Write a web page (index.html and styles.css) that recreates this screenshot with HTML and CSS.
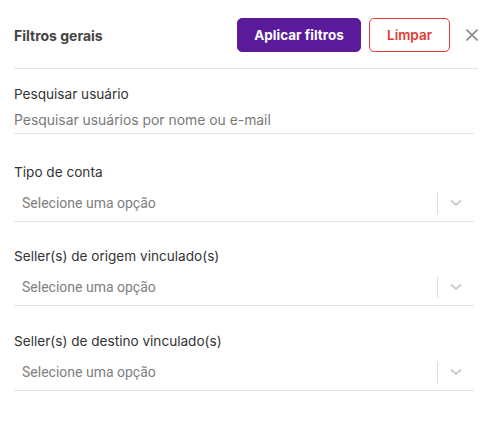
FILE: index.html
```html
<!DOCTYPE html>
<html lang="pt-BR">
<head>
<meta charset="utf-8">
<link rel="stylesheet" href="styles.css">
</head>
<body>
<div class="panel">
  <header class="header">
    <h2 class="title">Filtros gerais</h2>
    <div class="actions">
      <button class="btn btn-primary">Aplicar filtros</button>
      <button class="btn btn-outline">Limpar</button>
      <button class="close" aria-label="Fechar">
        <svg width="12" height="12" viewBox="0 0 12 12"><path d="M0.5 0.5 L11.5 11.5 M11.5 0.5 L0.5 11.5" stroke="#8a8a8a" stroke-width="1.6" fill="none"/></svg>
      </button>
    </div>
  </header>

  <div class="field field-first">
    <label class="label">Pesquisar usuário</label>
    <div class="input">Pesquisar usuários por nome ou e-mail</div>
  </div>

  <div class="field field-second">
    <label class="label">Tipo de conta</label>
    <div class="select">
      <span class="placeholder">Selecione uma opção</span>
      <span class="sep"></span>
      <span class="indicator"><svg width="12" height="8" viewBox="0 0 12 8"><path d="M1 1.5 L6 6 L11 1.5" stroke="#cccccc" stroke-width="2" fill="none"/></svg></span>
    </div>
  </div>

  <div class="field">
    <label class="label">Seller(s) de origem vinculado(s)</label>
    <div class="select">
      <span class="placeholder">Selecione uma opção</span>
      <span class="sep"></span>
      <span class="indicator"><svg width="12" height="8" viewBox="0 0 12 8"><path d="M1 1.5 L6 6 L11 1.5" stroke="#cccccc" stroke-width="2" fill="none"/></svg></span>
    </div>
  </div>

  <div class="field field-last">
    <label class="label">Seller(s) de destino vinculado(s)</label>
    <div class="select">
      <span class="placeholder">Selecione uma opção</span>
      <span class="sep"></span>
      <span class="indicator"><svg width="12" height="8" viewBox="0 0 12 8"><path d="M1 1.5 L6 6 L11 1.5" stroke="#cccccc" stroke-width="2" fill="none"/></svg></span>
    </div>
  </div>
</div>
</body>
</html>
```
FILE: styles.css
```css
* { box-sizing: border-box; }
body {
  margin: 0;
  background: #ffffff;
  font-family: "Inter", "Open Sans", sans-serif;
  color: #333333;
}
.panel {
  width: 500px;
  padding: 0 22px 0 14px;
}
.header {
  display: flex;
  align-items: center;
  justify-content: space-between;
  padding: 18px 0 16px;
  border-bottom: 1px solid #e2e2e2;
}
.title {
  margin: 0;
  font-size: 14px;
  font-weight: 700;
  color: #444444;
}
.actions {
  display: flex;
  align-items: center;
}
.btn {
  height: 34px;
  border-radius: 5px;
  font-family: "Inter", sans-serif;
  font-size: 13.5px;
  font-weight: 700;
  cursor: pointer;
}
.btn-primary {
  width: 124px;
  background: #5b1a99;
  border: 1px solid #5b1a99;
  color: #ffffff;
}
.btn-outline {
  width: 81px;
  margin-left: 8px;
  background: #ffffff;
  border: 1px solid #e53935;
  color: #e53935;
  font-weight: 600;
}
.close {
  margin-left: 16px;
  width: 12px;
  height: 12px;
  padding: 0;
  border: 0;
  background: none;
  display: flex;
}
.field {
  margin-top: 24px;
  margin-right: 4px;
}
.field-first { margin-top: 15px; }
.field-second { margin-top: 28px; }
.field-last { margin-top: 25px; }
.label {
  display: block;
  font-size: 13.6px;
  line-height: 20px;
  color: #333333;
}
.input {
  margin-top: 4px;
  height: 26px;
  border-bottom: 1px solid #e2e2e2;
  font-size: 13.9px;
  line-height: 24px;
  color: #7a7a7a;
}
.select {
  margin-top: 3px;
  height: 37px;
  display: flex;
  align-items: center;
  border-bottom: 1px solid #e2e2e2;
}
.placeholder {
  flex: 1;
  padding-left: 8px;
  font-family: "Roboto", sans-serif;
  font-size: 14px;
  color: #808080;
}
.sep {
  width: 1px;
  height: 21px;
  background: #dddddd;
}
.indicator {
  width: 36px;
  display: flex;
  justify-content: center;
  align-items: center;
}
```
